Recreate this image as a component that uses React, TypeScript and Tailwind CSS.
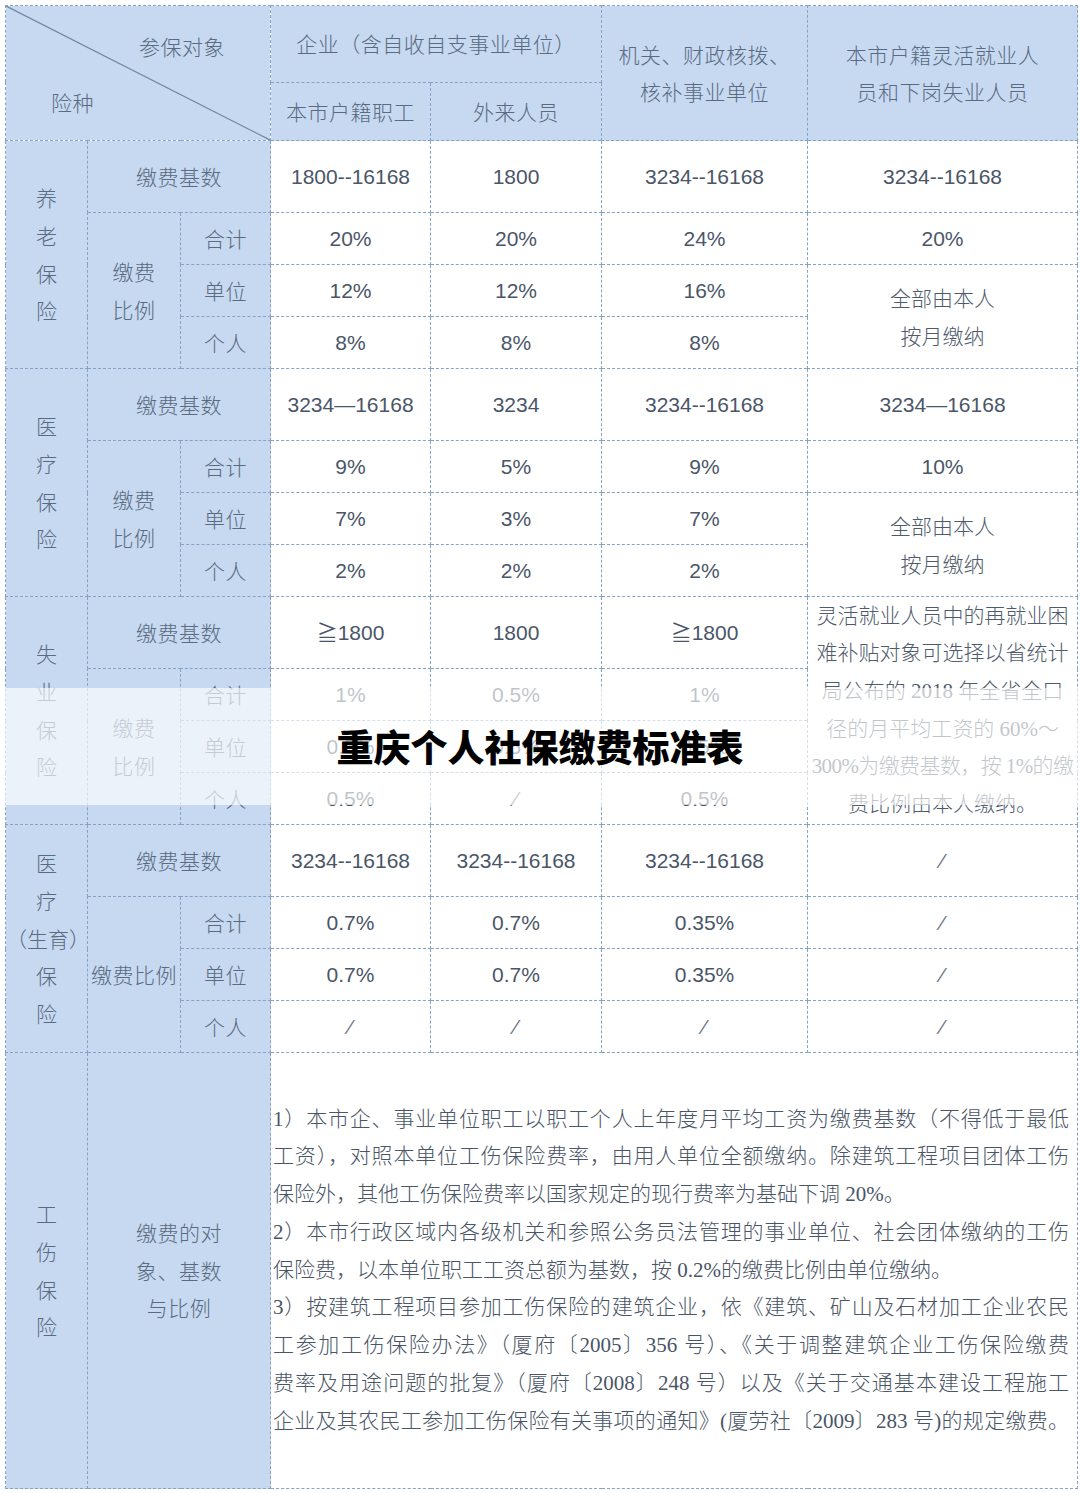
import React from "react";

const B = "border border-dashed border-[#86a3c6]";
const H = `${B} bg-[#c6d9f1] text-[#5a6a80] text-[21px] tracking-[0.5px] font-light text-center align-middle p-0`;
const D = `${B} bg-white text-[#4a5668] text-[21px] text-center align-middle p-0 font-['Liberation_Sans','Noto_Sans_CJK_SC',sans-serif]`;
const SERIF = "font-['Liberation_Serif','Noto_Sans_CJK_SC',serif]";
const NOTE = `${B} bg-white text-[#4f5b6c] text-[21px] font-light text-center align-middle p-0 leading-[37.6px]`;

type Section = {
  name: string[];
  ratioLabel: string[];
  base: string[];
  total: string[];
  unit: string[];
  person: string[];
  lastCol: "two" | "four" | "none";
  note?: string[];
};

const sections: Section[] = [
  {
    name: ["养", "老", "保", "险"],
    ratioLabel: ["缴费", "比例"],
    base: ["1800--16168", "1800", "3234--16168", "3234--16168"],
    total: ["20%", "20%", "24%", "20%"],
    unit: ["12%", "12%", "16%"],
    person: ["8%", "8%", "8%"],
    lastCol: "two",
    note: ["全部由本人", "按月缴纳"],
  },
  {
    name: ["医", "疗", "保", "险"],
    ratioLabel: ["缴费", "比例"],
    base: ["3234—16168", "3234", "3234--16168", "3234—16168"],
    total: ["9%", "5%", "9%", "10%"],
    unit: ["7%", "3%", "7%"],
    person: ["2%", "2%", "2%"],
    lastCol: "two",
    note: ["全部由本人", "按月缴纳"],
  },
  {
    name: ["失", "业", "保", "险"],
    ratioLabel: ["缴费", "比例"],
    base: ["≧1800", "1800", "≧1800"],
    total: ["1%", "0.5%", "1%"],
    unit: ["0.5%", "0.5%", "0.5%"],
    person: ["0.5%", "/", "0.5%"],
    lastCol: "four",
    note: [
      "灵活就业人员中的再就业困",
      "难补贴对象可选择以省统计",
      "局公布的 2018 年全省全口",
      "径的月平均工资的 60%～",
      "300%为缴费基数，按 1%的缴",
      "费比例由本人缴纳。",
    ],
  },
  {
    name: ["医", "疗", "（生育）", "保", "险"],
    ratioLabel: ["缴费比例"],
    base: ["3234--16168", "3234--16168", "3234--16168", "/"],
    total: ["0.7%", "0.7%", "0.35%", "/"],
    unit: ["0.7%", "0.7%", "0.35%", "/"],
    person: ["/", "/", "/", "/"],
    lastCol: "none",
  },
];

const Val = ({ v }: { v: string }) => (
  <td className={D}>
    {v === "/" ? <span className="text-[#6b7686] font-light">⁄</span> : v}
  </td>
);

const Lines = ({ lines }: { lines: string[] }) => (
  <>
    {lines.map((l, i) => (
      <div key={i} className="whitespace-nowrap">
        {l}
      </div>
    ))}
  </>
);

const SectionRows = ({ s }: { s: Section }) => (
  <>
    <tr className="h-[72px]">
      <td rowSpan={4} className={`${H} leading-[37.7px] tracking-normal`}>
        <Lines lines={s.name} />
      </td>
      <td colSpan={2} className={H}>
        缴费基数
      </td>
      {s.base.map((v, i) => (
        <Val key={i} v={v} />
      ))}
      {s.lastCol === "four" && s.note && (
        <td rowSpan={4} className={`${NOTE} ${SERIF} overflow-hidden`}>
          {s.note.map((l, i) => (
            <div key={i} className={`whitespace-nowrap ${i === 4 ? "tracking-[-0.6px]" : ""}`}>
              {l}
            </div>
          ))}
        </td>
      )}
    </tr>
    <tr className="h-[52px]">
      <td rowSpan={3} className={`${H} leading-[37.7px]`}>
        <Lines lines={s.ratioLabel} />
      </td>
      <td className={H}>合计</td>
      {s.total.map((v, i) => (
        <Val key={i} v={v} />
      ))}
    </tr>
    <tr className="h-[52px]">
      <td className={H}>单位</td>
      {s.unit.map((v, i) => (
        <Val key={i} v={v} />
      ))}
      {s.lastCol === "two" && s.note && (
        <td rowSpan={2} className={NOTE}>
          <Lines lines={s.note} />
        </td>
      )}
    </tr>
    <tr className="h-[52px]">
      <td className={H}>个人</td>
      {s.person.map((v, i) => (
        <Val key={i} v={v} />
      ))}
    </tr>
  </>
);

const injury = [
  { t: "1）本市企、事业单位职工以职工个人上年度月平均工资为缴费基数（不得低于最低", full: true },
  { t: "工资），对照本单位工伤保险费率，由用人单位全额缴纳。除建筑工程项目团体工伤", full: true },
  { t: "保险外，其他工伤保险费率以国家规定的现行费率为基础下调 20%。", full: false },
  { t: "2）本市行政区域内各级机关和参照公务员法管理的事业单位、社会团体缴纳的工伤", full: true },
  { t: "保险费，以本单位职工工资总额为基数，按 0.2%的缴费比例由单位缴纳。", full: false },
  { t: "3）按建筑工程项目参加工伤保险的建筑企业，依《建筑、矿山及石材加工企业农民", full: true },
  { t: "工参加工伤保险办法》（厦府〔2005〕356 号）、《关于调整建筑企业工伤保险缴费", full: true },
  { t: "费率及用途问题的批复》（厦府〔2008〕248 号）以及《关于交通基本建设工程施工", full: true },
  { t: "企业及其农民工参加工伤保险有关事项的通知》(厦劳社〔2009〕283 号)的规定缴费。", full: true },
];

export default function App() {
  return (
    <div className="relative w-[1080px] h-[1493px] bg-white pt-[5px] pl-[5px] font-['Noto_Sans_CJK_SC',sans-serif]">
      <table className="table-fixed border-collapse w-[1072px]">
        <colgroup>
          <col className="w-[82px]" />
          <col className="w-[93px]" />
          <col className="w-[90px]" />
          <col className="w-[160px]" />
          <col className="w-[171px]" />
          <col className="w-[206px]" />
          <col className="w-[270px]" />
        </colgroup>
        <tbody>
          <tr className="h-[76px]">
            <td rowSpan={2} colSpan={3} className={`${H} relative text-left`}>
              <svg
                className="absolute inset-0 w-full h-full"
                viewBox="0 0 100 100"
                preserveAspectRatio="none"
              >
                <line
                  x1="0"
                  y1="0"
                  x2="100"
                  y2="100"
                  stroke="#71879f"
                  strokeWidth="1.3"
                  vectorEffect="non-scaling-stroke"
                />
              </svg>
              <div className="flex flex-col h-[134px] leading-[24px]">
                <div className="pl-[133px] pt-[28px]">参保对象</div>
                <div className="pl-[45px] pt-[32px]">险种</div>
              </div>
            </td>
            <td colSpan={2} className={H}>
              企业（含自收自支事业单位）
            </td>
            <td rowSpan={2} className={`${H} leading-[37px]`}>
              <div>机关、财政核拨、</div>
              <div>核补事业单位</div>
            </td>
            <td rowSpan={2} className={`${H} leading-[37px]`}>
              <div>本市户籍灵活就业人</div>
              <div>员和下岗失业人员</div>
            </td>
          </tr>
          <tr className="h-[58px]">
            <td className={H}>本市户籍职工</td>
            <td className={H}>外来人员</td>
          </tr>

          {sections.map((s, i) => (
            <SectionRows key={i} s={s} />
          ))}

          <tr className="h-[436px]">
            <td className={`${H} leading-[37.7px] tracking-normal`}>
              <Lines lines={["工", "伤", "保", "险"]} />
            </td>
            <td colSpan={2} className={`${H} leading-[37.7px]`}>
              <Lines lines={["缴费的对", "象、基数", "与比例"]} />
            </td>
            <td
              colSpan={4}
              className={`${B} ${SERIF} bg-white text-[#4a5566] text-[21px] font-light text-left align-middle pl-[2px] pr-[8px] leading-[37.75px]`}
            >
              {injury.map((l, i) => (
                <div
                  key={i}
                  className={l.full ? "whitespace-nowrap [text-align-last:justify]" : "whitespace-nowrap"}
                >
                  {l.t}
                </div>
              ))}
            </td>
          </tr>
        </tbody>
      </table>

      <div className="absolute left-0 right-0 top-[688px] h-[117px] bg-white/65 flex items-center justify-center">
        <span className="text-[37px] font-black text-black leading-none">重庆个人社保缴费标准表</span>
      </div>
    </div>
  );
}
